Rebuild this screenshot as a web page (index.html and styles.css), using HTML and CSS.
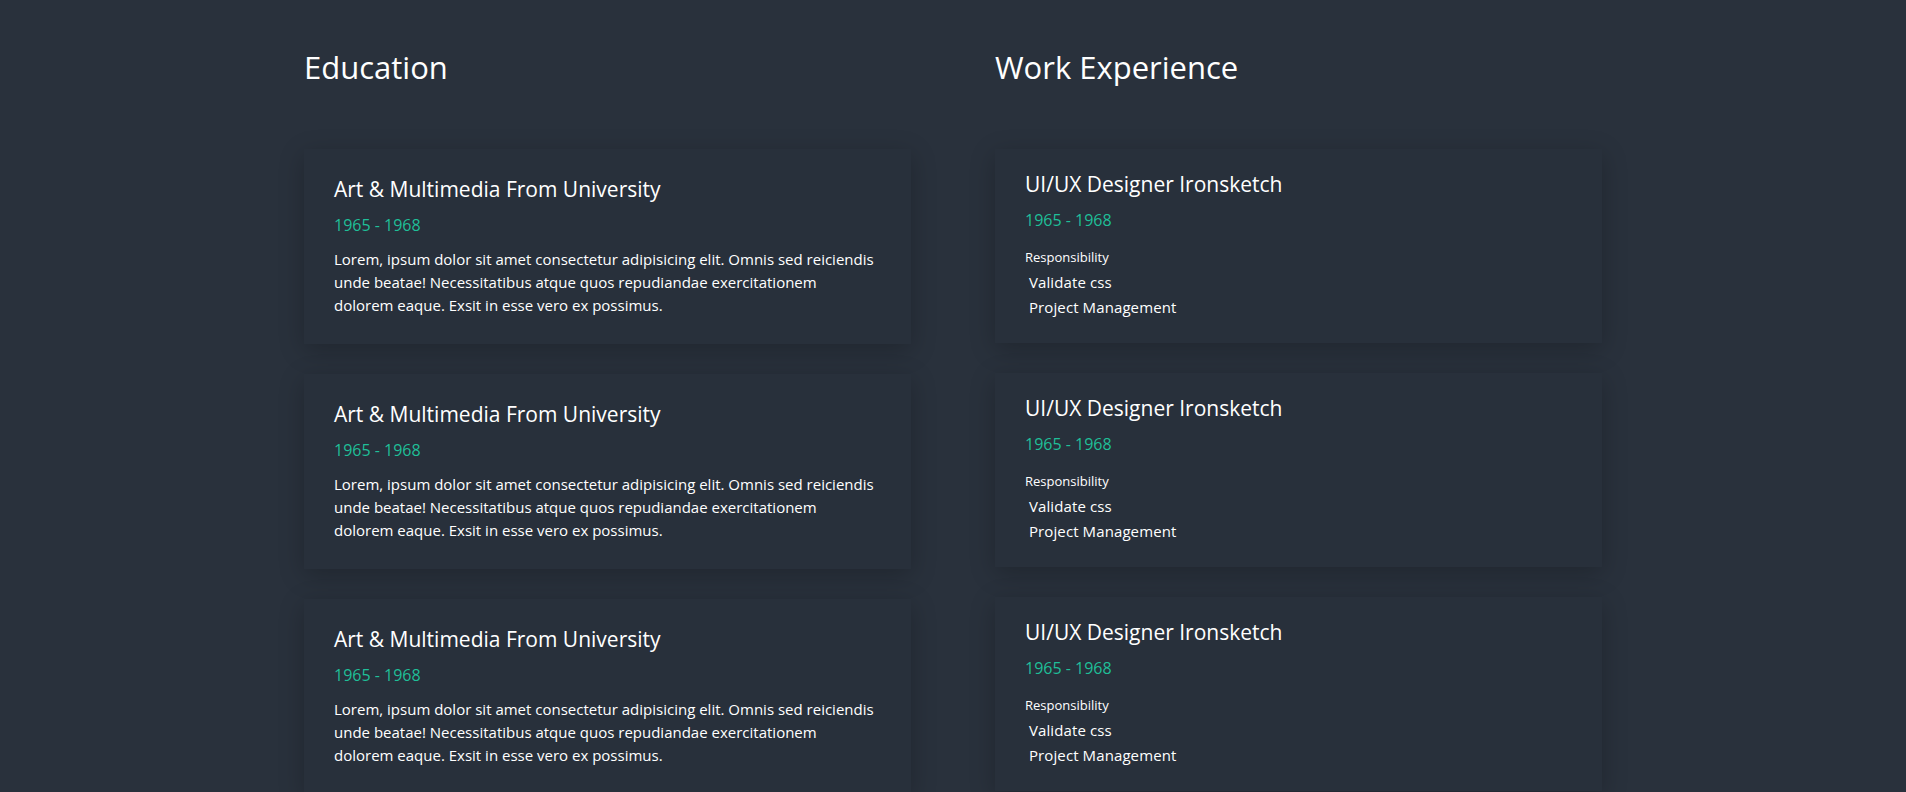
FILE: index.html
```html
<!DOCTYPE html>
<html lang="en">
<head>
<meta charset="utf-8">
<title>Resume</title>
<link rel="stylesheet" href="styles.css">
</head>
<body>
<main class="resume">
  <section class="column">
    <h2 class="section-title">Education</h2>
    <div class="card-list">
      <article class="card card-edu">
        <h3 class="card-title">Art &amp; Multimedia From University</h3>
        <p class="card-date">1965 - 1968</p>
        <p class="card-text">Lorem, ipsum dolor sit amet consectetur adipisicing elit. Omnis sed reiciendis unde beatae! Necessitatibus atque quos repudiandae exercitationem dolorem eaque. Exsit in esse vero ex possimus.</p>
      </article>
      <article class="card card-edu">
        <h3 class="card-title">Art &amp; Multimedia From University</h3>
        <p class="card-date">1965 - 1968</p>
        <p class="card-text">Lorem, ipsum dolor sit amet consectetur adipisicing elit. Omnis sed reiciendis unde beatae! Necessitatibus atque quos repudiandae exercitationem dolorem eaque. Exsit in esse vero ex possimus.</p>
      </article>
      <article class="card card-edu">
        <h3 class="card-title">Art &amp; Multimedia From University</h3>
        <p class="card-date">1965 - 1968</p>
        <p class="card-text">Lorem, ipsum dolor sit amet consectetur adipisicing elit. Omnis sed reiciendis unde beatae! Necessitatibus atque quos repudiandae exercitationem dolorem eaque. Exsit in esse vero ex possimus.</p>
      </article>
    </div>
  </section>
  <section class="column">
    <h2 class="section-title">Work Experience</h2>
    <div class="card-list">
      <article class="card card-work">
        <h3 class="card-title">UI/UX Designer Ironsketch</h3>
        <p class="card-date">1965 - 1968</p>
        <p class="resp-label">Responsibility</p>
        <ul class="resp-list">
          <li>Validate css</li>
          <li>Project Management</li>
        </ul>
      </article>
      <article class="card card-work">
        <h3 class="card-title">UI/UX Designer Ironsketch</h3>
        <p class="card-date">1965 - 1968</p>
        <p class="resp-label">Responsibility</p>
        <ul class="resp-list">
          <li>Validate css</li>
          <li>Project Management</li>
        </ul>
      </article>
      <article class="card card-work">
        <h3 class="card-title">UI/UX Designer Ironsketch</h3>
        <p class="card-date">1965 - 1968</p>
        <p class="resp-label">Responsibility</p>
        <ul class="resp-list">
          <li>Validate css</li>
          <li>Project Management</li>
        </ul>
      </article>
    </div>
  </section>
</main>
</body>
</html>
```

FILE: styles.css
```css
* {
  box-sizing: border-box;
}

html, body {
  margin: 0;
  padding: 0;
}

body {
  background: #29313c;
  color: #ffffff;
  font-family: "Open Sans", "Noto Sans", sans-serif;
}

.resume {
  width: 1298px;
  margin: 0 auto;
  padding-top: 48px;
  display: grid;
  grid-template-columns: 1fr 1fr;
  column-gap: 84px;
}

.section-title {
  margin: 0 0 63px;
  font-size: 31px;
  font-weight: 400;
  line-height: 38px;
  color: #ffffff;
}

.card-list {
  display: flex;
  flex-direction: column;
  gap: 30px;
}

.card {
  background: #28303b;
  box-shadow: 0 6px 24px rgba(0, 0, 0, 0.22);
  padding: 28px 35px 27px 30px;
}

.card-work {
  padding: 23px 35px 23px 30px;
}

.card-title {
  margin: 0;
  font-size: 21px;
  font-weight: 400;
  line-height: 24px;
  color: #ffffff;
}

.card-date {
  margin: 12px 0 0;
  font-size: 16px;
  line-height: 24px;
  color: #1fbf98;
}

.card-text {
  margin: 11px 0 0;
  font-size: 15px;
  line-height: 23px;
  color: #ffffff;
}

.resp-label {
  margin: 13px 0 0;
  font-size: 13px;
  line-height: 25px;
}

.resp-list {
  list-style: none;
  margin: 0;
  padding: 0;
}

.resp-list li {
  padding-left: 4px;
  font-size: 15px;
  letter-spacing: 0.1px;
  line-height: 25px;
}
```
